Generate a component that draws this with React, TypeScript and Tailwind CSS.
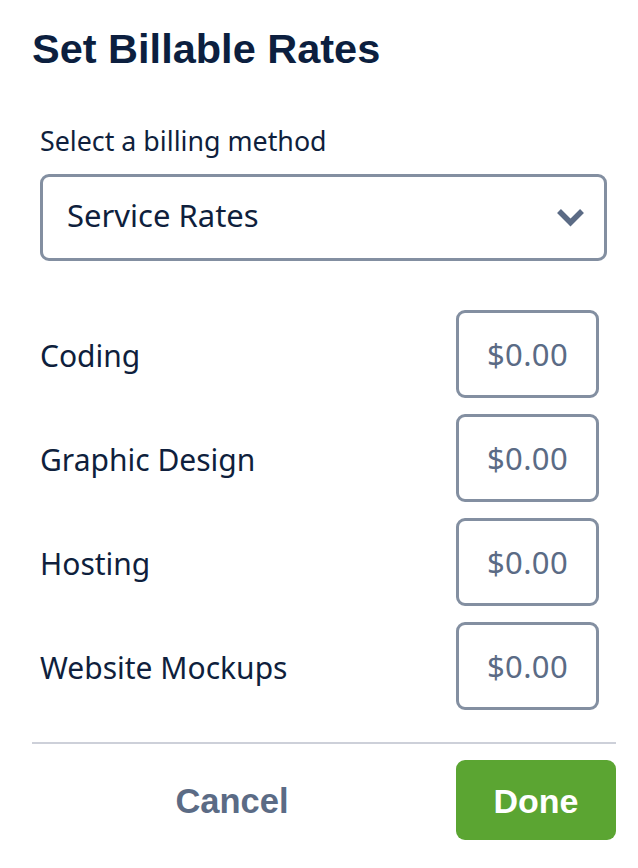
import React from "react";

const rows = ["Coding", "Graphic Design", "Hosting", "Website Mockups"];

export default function App() {
  return (
    <div className="min-h-[868px] w-full bg-white">
      <div className="flex flex-col pl-[32px] pr-[22px] pt-[28px]">
        <h1
          className="text-[41.5px] leading-[41px] font-bold text-[#0c1f3f]"
          style={{ fontFamily: '"Liberation Sans", Arial, sans-serif' }}
        >
          Set Billable Rates
        </h1>

        <div
          className="flex flex-col pl-[8px]"
          style={{ fontFamily: '"Noto Sans", sans-serif' }}
        >
          <label className="mt-[59px] text-[26.8px] leading-[26px] text-[#0f1f3d]">
            Select a billing method
          </label>

          <div className="mt-[20px] mr-[9px] flex h-[87px] items-center justify-between rounded-[9px] border-[3px] border-[#838fa1] bg-white pl-[24px] pr-[19px] pb-[5px]">
            <span className="text-[31px] leading-[31px] text-[#0f1f3d]">
              Service Rates
            </span>
            <svg width="29" height="19" viewBox="0 0 29 19" className="mt-[5px]">
              <path
                d="M3 3 L14.5 14.5 L26 3"
                fill="none"
                stroke="#5b6b85"
                strokeWidth="5.5"
                strokeLinejoin="miter"
              />
            </svg>
          </div>

          <div className="mt-[49px] mr-[17px] flex flex-col gap-4">
            {rows.map((r) => (
              <div key={r} className="flex h-[88px] items-center justify-between">
                <span className="pt-[3px] text-[30px] leading-[30px] text-[#0f1f3d]">{r}</span>
                <div className="flex h-[88px] w-[143px] items-center justify-center rounded-[9px] border-[3px] border-[#838fa1] bg-white">
                  <span className="text-[31px] leading-[31px] tracking-[0.4px] text-[#5b6b85]">
                    $0.00
                  </span>
                </div>
              </div>
            ))}
          </div>
        </div>

        <div className="mt-[32px] h-[2px] w-full bg-[#cdd0d9]" />

        <div
          className="mt-[16px] flex items-center justify-end"
          style={{ fontFamily: '"Liberation Sans", Arial, sans-serif' }}
        >
          <button className="mr-[144px] flex h-[80px] w-[160px] items-center justify-center pt-[4px] text-[34.5px] font-bold text-[#5b6b85]">
            Cancel
          </button>
          <button className="flex h-[80px] w-[160px] items-center justify-center rounded-[9px] bg-[#5ba532] pt-[3px] text-[34px] font-bold text-white">
            Done
          </button>
        </div>
      </div>
    </div>
  );
}
